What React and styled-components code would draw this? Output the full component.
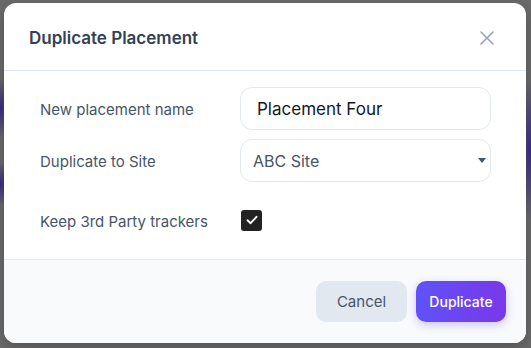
import React, { useState } from 'react'
import styled, { createGlobalStyle } from 'styled-components'

function App() {
  const [name, setName] = useState('Placement Four')
  const [site, setSite] = useState('abc')
  const [keep, setKeep] = useState(true)

  return (
    <>
      <GlobalStyle />
      <Backdrop>
        <Modal>
          <Header>
            <Title>Duplicate Placement</Title>
            <CloseButton aria-label="Close">
              <svg width="16" height="16" viewBox="0 0 16 16" fill="none">
                <path d="M2 2L14 14M14 2L2 14" stroke="#94a3b8" strokeWidth="1.6" strokeLinecap="round" />
              </svg>
            </CloseButton>
          </Header>
          <Body>
            <Row>
              <Label>New placement name</Label>
              <TextInput value={name} onChange={e => setName(e.target.value)} />
            </Row>
            <Row>
              <Label>Duplicate to Site</Label>
              <SelectWrap>
                <Select value={site} onChange={e => setSite(e.target.value)}>
                  <option value="abc">ABC Site</option>
                  <option value="xyz">XYZ Site</option>
                </Select>
                <Caret />
              </SelectWrap>
            </Row>
            <CheckRow>
              <Label>Keep 3rd Party trackers</Label>
              <Checkbox checked={keep} onClick={() => setKeep(!keep)}>
                {keep && (
                  <svg width="14" height="14" viewBox="0 0 14 14" fill="none">
                    <path d="M2.5 7.3L5.6 10.2L11.5 3.8" stroke="#fff" strokeWidth="1.9" strokeLinecap="round" strokeLinejoin="round" />
                  </svg>
                )}
              </Checkbox>
            </CheckRow>
          </Body>
          <Footer>
            <CancelButton>Cancel</CancelButton>
            <PrimaryButton>Duplicate</PrimaryButton>
          </Footer>
        </Modal>
      </Backdrop>
    </>
  )
}

const GlobalStyle = createGlobalStyle`
  html, body {
    margin: 0;
    padding: 0;
  }
  body {
    font-family: Inter, "Noto Sans", sans-serif;
    background: #6b6b6b;
  }
`

const Backdrop = styled.div`
  width: 531px;
  height: 348px;
  box-sizing: border-box;
  padding: 3px 5px 5px 4px;
  background:
    radial-gradient(ellipse 14px 30px at 0px 108px, #3a2a86 0%, rgba(58, 42, 134, 0) 100%),
    radial-gradient(ellipse 14px 22px at 0px 184px, #3a2a86 0%, rgba(58, 42, 134, 0) 100%),
    radial-gradient(ellipse 14px 70px at 531px 150px, #3a2a86 0%, rgba(58, 42, 134, 0) 100%),
    #6b6b6b;
`

const Modal = styled.div`
  width: 522px;
  height: 340px;
  background: #fff;
  border-radius: 12px;
  overflow: hidden;
  display: flex;
  flex-direction: column;
  box-shadow: 0 4px 14px rgba(0, 0, 0, 0.25);
`

const Header = styled.div`
  height: 68px;
  flex-shrink: 0;
  display: flex;
  align-items: center;
  justify-content: space-between;
  padding: 2px 31px 0 25px;
  box-sizing: border-box;
  border-bottom: 1px solid #e2e8f0;
`

const Title = styled.h2`
  margin: 0;
  font-size: 17px;
  font-weight: 600;
  color: #334155;
`

const CloseButton = styled.button`
  border: none;
  background: transparent;
  padding: 0;
  display: flex;
  cursor: pointer;
`

const Body = styled.div`
  flex: 1;
  padding: 16px 35px 0 36px;
  display: flex;
  flex-direction: column;
  gap: 9px;
`

const Row = styled.div`
  display: grid;
  grid-template-columns: 200px minmax(0, 1fr);
  align-items: center;
`

const CheckRow = styled(Row)`
  height: 44px;
  margin-top: 7px;
`

const Label = styled.label`
  font-size: 15px;
  color: #475569;
  padding-top: 2px;
`

const TextInput = styled.input`
  width: 100%;
  min-width: 0;
  height: 43px;
  box-sizing: border-box;
  border: 1px solid #e2e8f0;
  border-radius: 12px;
  padding: 0 16px;
  font-family: inherit;
  font-size: 17px;
  color: #111827;
  outline: none;
`

const SelectWrap = styled.div`
  position: relative;
`

const Select = styled.select`
  width: 100%;
  height: 43px;
  box-sizing: border-box;
  border: 1px solid #e2e8f0;
  border-radius: 12px;
  padding: 0 12px;
  font-family: inherit;
  font-size: 16px;
  color: #475569;
  background: #fff;
  appearance: none;
  outline: none;
`

const Caret = styled.span`
  position: absolute;
  right: 5px;
  top: 19px;
  width: 0;
  height: 0;
  border-left: 4px solid transparent;
  border-right: 4px solid transparent;
  border-top: 5px solid #475569;
  pointer-events: none;
`

const Checkbox = styled.button`
  width: 21px;
  height: 21px;
  padding: 0;
  margin-left: 1px;
  border: none;
  border-radius: 3px;
  background: ${props => (props.checked ? '#222' : '#fff')};
  display: flex;
  align-items: center;
  justify-content: center;
  cursor: pointer;
`

const Footer = styled.div`
  height: 84px;
  flex-shrink: 0;
  box-sizing: border-box;
  border-top: 1px solid #e2e8f0;
  background: #f8fafc;
  display: flex;
  align-items: center;
  justify-content: flex-end;
  gap: 9px;
  padding: 0 20px 0 0;
`

const BaseButton = styled.button`
  height: 41px;
  border: none;
  border-radius: 10px;
  font-family: inherit;
  cursor: pointer;
`

const CancelButton = styled(BaseButton)`
  width: 91px;
  background: #e2e8f0;
  color: #475569;
  font-size: 15px;
`

const PrimaryButton = styled(BaseButton)`
  width: 90px;
  background: linear-gradient(90deg, #5f52f7 0%, #7a38ea 100%);
  color: #fff;
  font-size: 14px;
  font-weight: 500;
  box-shadow: 0 3px 8px rgba(109, 72, 240, 0.3);
`

export default App
